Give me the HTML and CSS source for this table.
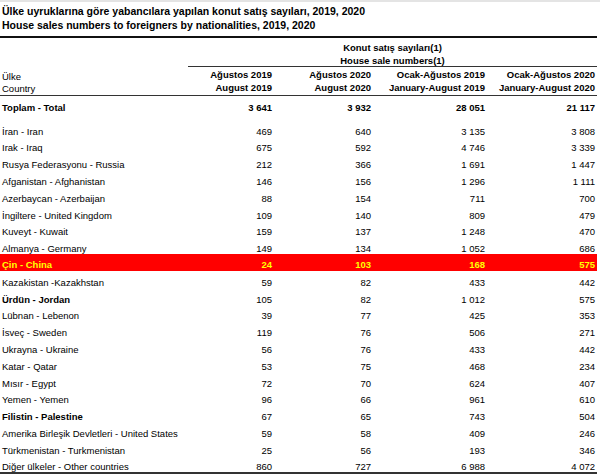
FILE: index.html
```html
<!DOCTYPE html>
<html lang="tr">
<head>
<meta charset="utf-8">
<title>Konut satış sayıları</title>
<link rel="stylesheet" href="styles.css">
</head>
<body>
<div class="sheet">
  <div class="topbar"></div>
  <div class="title">
    <div>Ülke uyruklarına göre yabancılara yapılan konut satış sayıları, 2019, 2020</div>
    <div>House sales numbers to foreigners by nationalities, 2019, 2020</div>
  </div>
  <div class="head">
    <div class="h-label"><div>Ülke</div><div>Country</div></div>
    <div class="h-group"><div>Konut satış sayıları(1)</div><div>House sale numbers(1)</div></div>
    <div class="h-col"><div>Ağustos 2019</div><div>August 2019</div></div>
    <div class="h-col"><div>Ağustos 2020</div><div>August 2020</div></div>
    <div class="h-col"><div>Ocak-Ağustos 2019</div><div>January-August 2019</div></div>
    <div class="h-col"><div>Ocak-Ağustos 2020</div><div>January-August 2020</div></div>
  </div>
  <div class="body">
    <div class="row total"><span class="lbl">Toplam - Total</span><span class="num">3 641</span><span class="num">3 932</span><span class="num">28 051</span><span class="num">21 117</span></div>
    <div class="spacer"></div>
    <div class="row"><span class="lbl">İran - Iran</span><span class="num">469</span><span class="num">640</span><span class="num">3 135</span><span class="num">3 808</span></div>
    <div class="row"><span class="lbl">Irak - Iraq</span><span class="num">675</span><span class="num">592</span><span class="num">4 746</span><span class="num">3 339</span></div>
    <div class="row"><span class="lbl">Rusya Federasyonu - Russia</span><span class="num">212</span><span class="num">366</span><span class="num">1 691</span><span class="num">1 447</span></div>
    <div class="row"><span class="lbl">Afganistan - Afghanistan</span><span class="num">146</span><span class="num">156</span><span class="num">1 296</span><span class="num">1 111</span></div>
    <div class="row"><span class="lbl">Azerbaycan - Azerbaijan</span><span class="num">88</span><span class="num">154</span><span class="num">711</span><span class="num">700</span></div>
    <div class="row"><span class="lbl">İngiltere - United Kingdom</span><span class="num">109</span><span class="num">140</span><span class="num">809</span><span class="num">479</span></div>
    <div class="row"><span class="lbl">Kuveyt - Kuwait</span><span class="num">159</span><span class="num">137</span><span class="num">1 248</span><span class="num">470</span></div>
    <div class="row"><span class="lbl">Almanya - Germany</span><span class="num">149</span><span class="num">134</span><span class="num">1 052</span><span class="num">686</span></div>
    <div class="row hl"><span class="lbl">Çin - China</span><span class="num">24</span><span class="num">103</span><span class="num">168</span><span class="num">575</span></div>
    <div class="row"><span class="lbl">Kazakistan -Kazakhstan</span><span class="num">59</span><span class="num">82</span><span class="num">433</span><span class="num">442</span></div>
    <div class="row"><span class="lbl strong">Ürdün - Jordan</span><span class="num">105</span><span class="num">82</span><span class="num">1 012</span><span class="num">575</span></div>
    <div class="row"><span class="lbl">Lübnan - Lebenon</span><span class="num">39</span><span class="num">77</span><span class="num">425</span><span class="num">353</span></div>
    <div class="row"><span class="lbl">İsveç - Sweden</span><span class="num">119</span><span class="num">76</span><span class="num">506</span><span class="num">271</span></div>
    <div class="row"><span class="lbl">Ukrayna - Ukraine</span><span class="num">56</span><span class="num">76</span><span class="num">433</span><span class="num">442</span></div>
    <div class="row"><span class="lbl">Katar - Qatar</span><span class="num">53</span><span class="num">75</span><span class="num">468</span><span class="num">234</span></div>
    <div class="row"><span class="lbl">Mısır - Egypt</span><span class="num">72</span><span class="num">70</span><span class="num">624</span><span class="num">407</span></div>
    <div class="row"><span class="lbl">Yemen - Yemen</span><span class="num">96</span><span class="num">66</span><span class="num">961</span><span class="num">610</span></div>
    <div class="row"><span class="lbl strong">Filistin - Palestine</span><span class="num">67</span><span class="num">65</span><span class="num">743</span><span class="num">504</span></div>
    <div class="row"><span class="lbl">Amerika Birleşik Devletleri - United States</span><span class="num">59</span><span class="num">58</span><span class="num">409</span><span class="num">246</span></div>
    <div class="row"><span class="lbl">Türkmenistan - Turkmenistan</span><span class="num">25</span><span class="num">56</span><span class="num">193</span><span class="num">346</span></div>
    <div class="row last"><span class="lbl">Diğer ülkeler - Other countries</span><span class="num">860</span><span class="num">727</span><span class="num">6 988</span><span class="num">4 072</span></div>
  </div>
</div>
</body>
</html>
```

FILE: styles.css
```css
* { box-sizing: border-box; }
html, body { margin: 0; padding: 0; background: #fff; }
body {
  font-family: "Liberation Sans", Arial, sans-serif;
  color: #000;
  font-size: 9.5px;
}
.sheet { width: 597px; }
.topbar { height: 2px; background: #e4e4e4; width: 600px; }
.title {
  font-size: 10.5px;
  font-weight: bold;
  line-height: 13.5px;
  padding: 3.4px 0 3.6px 2px;
  border-bottom: 2px solid #111;
  height: 36px;
}
.head {
  display: grid;
  grid-template-columns: 188px 86px 99px 114px 110px;
  grid-template-rows: 29px 28px;
  border-bottom: 1px solid #333;
}
.h-label {
  grid-row: 1 / 3;
  grid-column: 1;
  display: flex;
  flex-direction: column;
  justify-content: flex-end;
  line-height: 12px;
  padding-left: 2px;
}
.h-group {
  grid-row: 1;
  grid-column: 2 / 6;
  text-align: center;
  font-weight: bold;
  line-height: 13.5px;
  padding-top: 2.66px;
  border-bottom: 1px solid #333;
}
.h-col {
  grid-row: 2;
  text-align: right;
  font-weight: bold;
  line-height: 13.5px;
  padding: 0.5px 2px 0 0;
  white-space: nowrap;
}
.row {
  display: grid;
  grid-template-columns: 188px 86px 99px 114px 110px;
  height: 16.8px;
  align-items: end;
  line-height: 11px;
  white-space: nowrap;
}
.lbl { padding-left: 2px; }
.num { text-align: right; padding-right: 2px; }
.strong { font-weight: bold; }
.total { font-weight: bold; }
.spacer { height: 7px; }
.hl {
  background: #ff0000;
  color: #ffff00;
  font-weight: bold;
  padding-bottom: 1.4px;
}
.last {
  height: 16.4px;
  border-bottom: 2px solid #333;
  height: 18.4px;
}
```
